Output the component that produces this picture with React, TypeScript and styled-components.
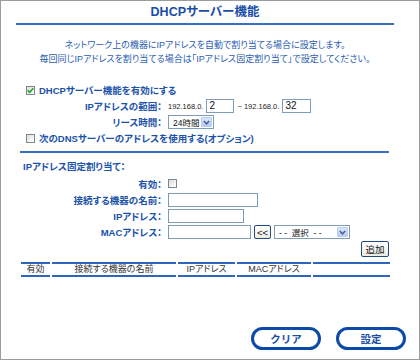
import React from "react";
import styled, { createGlobalStyle } from "styled-components";

const GlobalStyle = createGlobalStyle`
  html, body { margin: 0; padding: 0; background: #ffffff; }
  * { box-sizing: border-box; }
`;

const BLUE_TEXT = "#1b52aa";
const BLUE_LINE = "#3870c4";

const Frame = styled.div`
  width: 420px;
  height: 360px;
  border: 1px solid #9c9c9c;
  background: #ffffff;
  display: flex;
  flex-direction: column;
  font-family: "Liberation Sans", "Noto Sans CJK JP", sans-serif;
  font-feature-settings: "palt";
  color: #222;
`;

const Title = styled.h1`
  margin: 0 25px 0 15px;
  height: 22px;
  line-height: 22px;
  font-size: 12.5px;
  font-weight: bold;
  color: #1a4ea6;
  text-align: center;
`;

const Rule = styled.div<{ $left: number; $right: number }>`
  height: 2px;
  margin: 0 ${(p) => p.$right}px 0 ${(p) => p.$left}px;
  background: ${BLUE_LINE};
`;

const Description = styled.p`
  margin: 13px 25px 0 15px;
  font-size: 9px;
  line-height: 14px;
  color: #2a5db0;
  text-align: center;
`;

const Section = styled.div<{ $top: number }>`
  margin-top: ${(p) => p.$top}px;
  display: flex;
  flex-direction: column;
`;

const CheckRow = styled.label<{ $indent: number }>`
  display: flex;
  align-items: center;
  gap: 4px;
  height: 16px;
  padding-left: ${(p) => p.$indent}px;
  font-size: 9.5px;
  font-weight: bold;
  color: ${BLUE_TEXT};
`;

const Box = styled.span`
  width: 9px;
  height: 9px;
  border: 1px solid #7a8797;
  background: linear-gradient(135deg, #dcdcd6 0%, #f6f6f3 70%, #ffffff 100%);
  display: inline-flex;
  align-items: center;
  justify-content: center;
  flex: none;
`;

const FieldRow = styled.div<{ $h?: number }>`
  display: grid;
  grid-template-columns: 161px 1fr;
  column-gap: 6px;
  align-items: center;
  height: ${(p) => p.$h ?? 16}px;
`;

const Label = styled.span`
  text-align: right;
  font-size: 9.5px;
  font-weight: bold;
  color: ${BLUE_TEXT};
  white-space: nowrap;
`;

const Values = styled.div`
  display: flex;
  align-items: center;
  gap: 3px;
  font-size: 7.5px;
  color: #222;
  white-space: nowrap;
`;

const TextInput = styled.div<{ $w: number }>`
  width: ${(p) => p.$w}px;
  height: 14px;
  border: 1px solid #7f9db9;
  background: #fff;
  font-size: 10px;
  line-height: 12px;
  padding-left: 2px;
  color: #111;
`;

const SelectBox = styled.div<{ $w: number }>`
  width: ${(p) => p.$w}px;
  height: 14px;
  border: 1px solid #7f9db9;
  background: #fff;
  display: flex;
  align-items: center;
  justify-content: space-between;
  padding: 0 1px 0 4px;
  font-size: 8.5px;
  color: #111;
  white-space: pre;
`;

const ArrowBtn = styled.span`
  width: 11px;
  height: 10px;
  background: linear-gradient(#dbe6fb, #b5cbf5);
  border: 1px solid #b9cdf3;
  border-radius: 1px;
  display: inline-flex;
  align-items: center;
  justify-content: center;
  flex: none;
`;

const SmallButton = styled.span<{ $w: number; $h: number }>`
  width: ${(p) => p.$w}px;
  height: ${(p) => p.$h}px;
  border: 1px solid #1f4a80;
  border-radius: 2px;
  background: linear-gradient(#ffffff, #ecebe4);
  display: inline-flex;
  align-items: center;
  justify-content: center;
  font-size: 9.5px;
  color: #111;
`;

const AddRow = styled.div`
  display: flex;
  justify-content: flex-end;
  margin: 1px 30px 0 0;
`;

const SectionHead = styled.div`
  height: 16px;
  line-height: 16px;
  padding-left: 22px;
  font-size: 9.5px;
  font-weight: bold;
  color: ${BLUE_TEXT};
`;

const Table = styled.div`
  margin: 5px 0 0 20px;
  display: grid;
  grid-template-columns: 29px 124px 57px 74px 77px;
  column-gap: 2px;
`;

const HeadCell = styled.div`
  height: 15px;
  border-top: 2px solid #2e65be;
  border-bottom: 2px solid #2e65be;
  font-size: 9px;
  line-height: 11px;
  color: #333;
  text-align: center;
`;

const Footer = styled.div`
  margin-top: auto;
  display: flex;
  justify-content: flex-end;
  gap: 15px;
  padding: 0 13px 9px 0;
`;

const PillButton = styled.button`
  width: 70px;
  height: 23px;
  border: 3px solid #0b4aa8;
  border-radius: 12px;
  background: #fff;
  font-family: "Liberation Sans", "Noto Sans CJK JP", sans-serif;
  font-size: 10.5px;
  font-weight: bold;
  color: #1a4ea6;
  padding: 0;
`;

const Check = () => (
  <svg width="7" height="7" viewBox="0 0 7 7">
    <path d="M0.8 3.4 L2.7 5.4 L6.3 1.2" stroke="#21a121" strokeWidth="1.6" fill="none" />
  </svg>
);

const Arrow = () => (
  <svg width="7" height="5" viewBox="0 0 7 5">
    <path d="M0.8 1 L3.5 3.8 L6.2 1" stroke="#4d6185" strokeWidth="1.5" fill="none" />
  </svg>
);

export default function App() {
  return (
    <>
      <GlobalStyle />
      <Frame>
        <Title>DHCPサーバー機能</Title>
        <Rule $left={15} $right={25} />
        <Description>
          ネットワーク上の機器にIPアドレスを自動で割り当てる場合に設定します。
          <br />
          毎回同じIPアドレスを割り当てる場合は「IPアドレス固定割り当て」で設定してください。
        </Description>

        <Section $top={16}>
          <CheckRow $indent={25}>
            <Box>
              <Check />
            </Box>
            DHCPサーバー機能を有効にする
          </CheckRow>
          <FieldRow>
            <Label>IPアドレスの範囲：</Label>
            <Values>
              <span>192.168.0.</span>
              <TextInput $w={28}>2</TextInput>
              <span>~ 192.168.0.</span>
              <TextInput $w={29}>32</TextInput>
            </Values>
          </FieldRow>
          <FieldRow>
            <Label>リース時間：</Label>
            <Values>
              <SelectBox $w={46}>
                24時間
                <ArrowBtn>
                  <Arrow />
                </ArrowBtn>
              </SelectBox>
            </Values>
          </FieldRow>
          <CheckRow $indent={25}>
            <Box />
            次のDNSサーバーのアドレスを使用する(オプション)
          </CheckRow>
        </Section>

        <Section $top={5}>
          <Rule $left={19} $right={30} />
        </Section>

        <Section $top={6}>
          <SectionHead>IPアドレス固定割り当て：</SectionHead>
          <FieldRow $h={17}>
            <Label>有効：</Label>
            <Values>
              <Box />
            </Values>
          </FieldRow>
          <FieldRow>
            <Label>接続する機器の名前：</Label>
            <Values>
              <TextInput $w={90} />
            </Values>
          </FieldRow>
          <FieldRow>
            <Label>IPアドレス：</Label>
            <Values>
              <TextInput $w={76} />
            </Values>
          </FieldRow>
          <FieldRow>
            <Label>MACアドレス：</Label>
            <Values>
              <TextInput $w={83} />
              <SmallButton $w={17} $h={14}>&lt;&lt;</SmallButton>
              <SelectBox $w={76}>
                {"- -  選択  - -"}
                <ArrowBtn>
                  <Arrow />
                </ArrowBtn>
              </SelectBox>
            </Values>
          </FieldRow>
          <AddRow>
            <SmallButton $w={28} $h={16}>追加</SmallButton>
          </AddRow>
        </Section>

        <Table>
          <HeadCell>有効</HeadCell>
          <HeadCell>接続する機器の名前</HeadCell>
          <HeadCell>IPアドレス</HeadCell>
          <HeadCell>MACアドレス</HeadCell>
          <HeadCell />
        </Table>

        <Footer>
          <PillButton type="button">クリア</PillButton>
          <PillButton type="button">設定</PillButton>
        </Footer>
      </Frame>
    </>
  );
}
